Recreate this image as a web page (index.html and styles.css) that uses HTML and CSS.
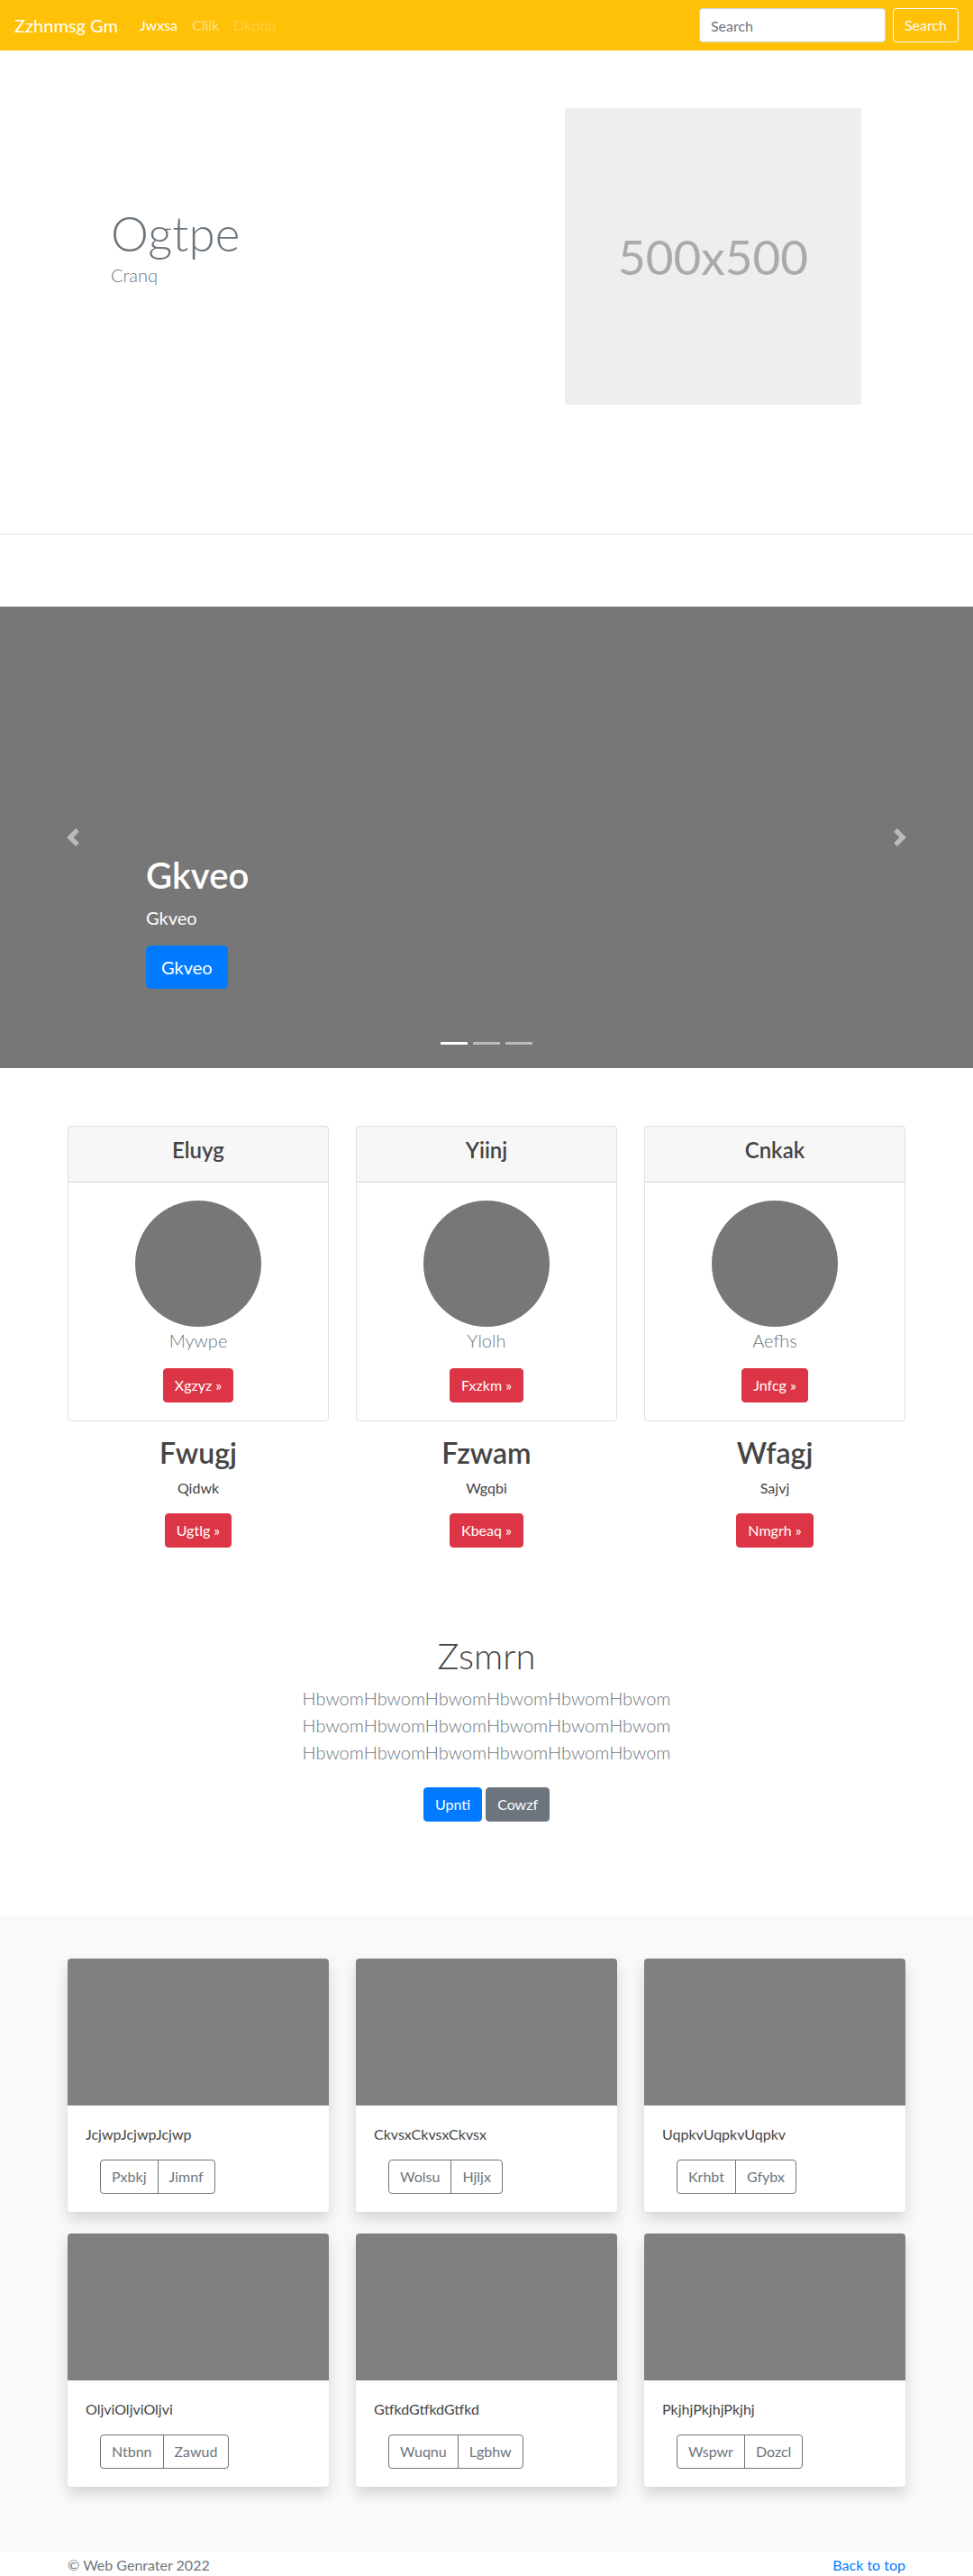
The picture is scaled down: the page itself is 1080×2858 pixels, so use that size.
FILE: index.html
```html
<!DOCTYPE html>
<html lang="en">
<head>
<meta charset="utf-8">
<title>Zzhnmsg Gm</title>
<link rel="stylesheet" href="styles.css">
</head>
<body>
<nav class="navbar">
  <a class="brand" href="#">Zzhnmsg Gm</a>
  <ul class="nav-links">
    <li><a class="nav-link active" href="#">Jwxsa</a></li>
    <li><a class="nav-link" href="#">Cliik</a></li>
    <li><a class="nav-link disabled" href="#">Dkpbp</a></li>
  </ul>
  <form class="search">
    <input class="search-input" type="text" placeholder="Search">
    <button class="btn btn-outline-light" type="button">Search</button>
  </form>
</nav>

<section class="hero">
  <div class="container hero-row">
    <div class="hero-text">
      <h1 class="display">Ogtpe</h1>
      <p class="hero-sub">Cranq</p>
    </div>
    <div class="hero-media">
      <div class="ph-500">500x500</div>
    </div>
  </div>
</section>

<div class="carousel">
  <div class="carousel-caption">
    <h1 class="caption-title">Gkveo</h1>
    <p class="caption-text">Gkveo</p>
    <div class="caption-cta"><a class="btn btn-lg btn-primary" href="#">Gkveo</a></div>
  </div>
  <div class="indicators">
    <span class="active"></span><span></span><span></span>
  </div>
  <a class="carousel-control prev" href="#">
    <svg viewBox="0 0 8 8" fill="#fff"><path d="M5.25 0l-4 4 4 4 1.5-1.5L4.25 4l2.5-2.5L5.25 0z"/></svg>
  </a>
  <a class="carousel-control next" href="#">
    <svg viewBox="0 0 8 8" fill="#fff"><path d="M2.75 0l-1.5 1.5L3.75 4l-2.5 2.5L2.75 8l4-4-4-4z"/></svg>
  </a>
</div>

<div class="container">
  <div class="features">
    <div class="fcard">
      <div class="fcard-header"><h4>Eluyg</h4></div>
      <div class="fcard-body">
        <div class="circle"></div>
        <p class="fcard-text">Mywpe</p>
        <a class="btn btn-danger" href="#">Xgzyz &raquo;</a>
      </div>
    </div>
    <div class="fcard">
      <div class="fcard-header"><h4>Yiinj</h4></div>
      <div class="fcard-body">
        <div class="circle"></div>
        <p class="fcard-text">Ylolh</p>
        <a class="btn btn-danger" href="#">Fxzkm &raquo;</a>
      </div>
    </div>
    <div class="fcard">
      <div class="fcard-header"><h4>Cnkak</h4></div>
      <div class="fcard-body">
        <div class="circle"></div>
        <p class="fcard-text">Aefhs</p>
        <a class="btn btn-danger" href="#">Jnfcg &raquo;</a>
      </div>
    </div>
  </div>

  <div class="marketing">
    <div class="mcol">
      <h2>Fwugj</h2>
      <p>Qidwk</p>
      <a class="btn btn-danger" href="#">Ugtlg &raquo;</a>
    </div>
    <div class="mcol">
      <h2>Fzwam</h2>
      <p>Wgqbi</p>
      <a class="btn btn-danger" href="#">Kbeaq &raquo;</a>
    </div>
    <div class="mcol">
      <h2>Wfagj</h2>
      <p>Sajvj</p>
      <a class="btn btn-danger" href="#">Nmgrh &raquo;</a>
    </div>
  </div>
</div>

<section class="jumbo">
  <div class="container jumbo-inner">
    <h1>Zsmrn</h1>
    <p class="lead">HbwomHbwomHbwomHbwomHbwomHbwom HbwomHbwomHbwomHbwomHbwomHbwom HbwomHbwomHbwomHbwomHbwomHbwom</p>
    <div class="actions">
      <a class="btn btn-primary" href="#">Upnti</a>
      <a class="btn btn-secondary" href="#">Cowzf</a>
    </div>
  </div>
</section>

<section class="album">
  <div class="container album-grid">
    <div class="acard">
      <div class="acard-img"></div>
      <div class="acard-body">
        <p class="acard-text">JcjwpJcjwpJcjwp</p>
        <div class="btn-group"><a class="btn btn-outline-secondary" href="#">Pxbkj</a><a class="btn btn-outline-secondary" href="#">Jimnf</a></div>
      </div>
    </div>
    <div class="acard">
      <div class="acard-img"></div>
      <div class="acard-body">
        <p class="acard-text">CkvsxCkvsxCkvsx</p>
        <div class="btn-group"><a class="btn btn-outline-secondary" href="#">Wolsu</a><a class="btn btn-outline-secondary" href="#">Hjljx</a></div>
      </div>
    </div>
    <div class="acard">
      <div class="acard-img"></div>
      <div class="acard-body">
        <p class="acard-text">UqpkvUqpkvUqpkv</p>
        <div class="btn-group"><a class="btn btn-outline-secondary" href="#">Krhbt</a><a class="btn btn-outline-secondary" href="#">Gfybx</a></div>
      </div>
    </div>
    <div class="acard">
      <div class="acard-img"></div>
      <div class="acard-body">
        <p class="acard-text">OljviOljviOljvi</p>
        <div class="btn-group"><a class="btn btn-outline-secondary" href="#">Ntbnn</a><a class="btn btn-outline-secondary" href="#">Zawud</a></div>
      </div>
    </div>
    <div class="acard">
      <div class="acard-img"></div>
      <div class="acard-body">
        <p class="acard-text">GtfkdGtfkdGtfkd</p>
        <div class="btn-group"><a class="btn btn-outline-secondary" href="#">Wuqnu</a><a class="btn btn-outline-secondary" href="#">Lgbhw</a></div>
      </div>
    </div>
    <div class="acard">
      <div class="acard-img"></div>
      <div class="acard-body">
        <p class="acard-text">PkjhjPkjhjPkjhj</p>
        <div class="btn-group"><a class="btn btn-outline-secondary" href="#">Wspwr</a><a class="btn btn-outline-secondary" href="#">Dozcl</a></div>
      </div>
    </div>
  </div>
</section>

<footer class="footer">
  <div class="container footer-row">
    <p>&copy; Web Genrater 2022</p>
    <p><a href="#">Back to top</a></p>
  </div>
</footer>
</body>
</html>
```

FILE: styles.css
```css
* { box-sizing: border-box; }
html, body { margin: 0; }
body {
  font-family: Lato, "Liberation Sans", sans-serif;
  font-size: 16px;
  line-height: 1.5;
  color: #212529;
  background: #fff;
}
h1, h2, h4, p { margin-top: 0; }
a { text-decoration: none; }

.container { max-width: 960px; margin: 0 auto; padding: 0 15px; }

/* Navbar */
.navbar {
  height: 56px;
  background: #ffc107;
  display: flex;
  align-items: center;
  padding: 8px 16px;
}
.brand { font-size: 20px; line-height: 30px; color: #fff; margin-right: 16px; }
.nav-links { display: flex; list-style: none; margin: 0; padding: 0; flex: 1; }
.nav-link { display: block; padding: 8px; line-height: 24px; color: rgba(255,255,255,.5); }
.nav-link.active { color: #fff; }
.nav-link.disabled { color: rgba(255,255,255,.25); }
.search { display: flex; align-items: center; margin: 0; }
.search-input {
  width: 207px; height: 38px;
  padding: 6px 12px;
  font-family: inherit; font-size: 16px;
  border: 1px solid #ced4da; border-radius: 4px;
  margin-right: 8px;
  color: #495057; background: #fff;
}
.search-input::placeholder { color: #6c757d; }

/* Buttons */
.btn {
  display: inline-block;
  font-family: inherit; font-size: 16px; font-weight: 400;
  line-height: 24px;
  padding: 6px 12px;
  border: 1px solid transparent;
  border-radius: 4px;
  text-align: center;
  vertical-align: middle;
  cursor: pointer;
}
.btn-outline-light { color: #f8f9fa; border-color: #f8f9fa; background: transparent; }
.btn-primary { color: #fff; background: #007bff; border-color: #007bff; }
.btn-secondary { color: #fff; background: #6c757d; border-color: #6c757d; }
.btn-danger { color: #fff; background: #dc3545; border-color: #dc3545; }
.btn-outline-secondary { color: #6c757d; border-color: #6c757d; background: transparent; }
.btn-lg { font-size: 20px; line-height: 30px; padding: 8px 16px; border-radius: 4.8px; }

/* Hero */
.hero { padding: 64px 0 143px; border-bottom: 1px solid rgba(0,0,0,.1); margin-bottom: 80px; }
.hero-row { display: flex; }
.hero-text { flex: 0 0 552px; padding: 108px 0 0 48px; }
.display { font-size: 53px; font-weight: 300; line-height: 62px; margin: 0; color: #6c757d; }
.hero-sub { font-size: 20px; font-weight: 300; line-height: 30px; margin: 0; color: #6c757d; }
.ph-500 {
  width: 329px; height: 329px;
  background: #eee; color: #aaa;
  display: flex; align-items: center; justify-content: center;
  font-size: 53px;
}

/* Carousel */
.carousel { position: relative; height: 512px; background: #777; margin-bottom: 64px; }
.carousel-caption { position: absolute; left: 15%; right: 15%; bottom: 48px; padding: 20px 0; color: #fff; z-index: 2; }
.caption-title { font-size: 40px; font-weight: 600; line-height: 1.2; margin: 0 0 8px; }
.caption-text { font-size: 20px; line-height: 30px; margin: 0 0 16px; }
.caption-cta { display: flex; margin-bottom: 20px; }
.indicators { position: absolute; left: 0; right: 0; bottom: 26px; display: flex; justify-content: center; gap: 6px; }
.indicators span { width: 30px; height: 3px; background: rgba(255,255,255,.5); }
.indicators .active { background: #fff; }
.carousel-control { position: absolute; top: 0; bottom: 0; width: 15%; display: flex; align-items: center; justify-content: center; opacity: .5; }
.carousel-control.prev { left: 0; }
.carousel-control.next { right: 0; }
.carousel-control svg { width: 20px; height: 20px; }

/* Feature cards */
.features { display: grid; grid-template-columns: repeat(3, 1fr); column-gap: 30px; }
.fcard { border: 1px solid rgba(0,0,0,.125); border-radius: 4px; text-align: center; margin-bottom: 16px; }
.fcard-header { background: rgba(0,0,0,.03); border-bottom: 1px solid rgba(0,0,0,.125); padding: 12px 20px; }
.fcard-header h4 { font-size: 24px; font-weight: 600; line-height: 1.2; margin: 0 0 8px; color: #444; }
.fcard-body { padding: 20px; }
.circle { display: block; width: 140px; height: 140px; border-radius: 50%; background: #777; margin: 0 auto; }
.fcard-text { font-size: 20px; font-weight: 300; line-height: 30px; color: #6c757d; margin: 0 0 16px; }

.marketing { display: grid; grid-template-columns: repeat(3, 1fr); column-gap: 30px; text-align: center; }
.marketing h2 { font-size: 32px; font-weight: 600; line-height: 1.2; margin: 0 0 8px; color: #444; }
.marketing p { margin: 0 0 16px; color: #444; }

/* Jumbotron */
.jumbo { padding: 96px 0; text-align: center; }
.jumbo-inner { max-width: 640px; }
.jumbo h1 { font-size: 40px; font-weight: 300; line-height: 1.2; margin: 0 0 8px; color: #444; }
.jumbo .lead { font-size: 20px; font-weight: 300; line-height: 30px; color: #6c757d; margin: 0 0 16px; }
.actions { display: flex; justify-content: center; gap: 4px; padding: 8px 0; }

/* Album */
.album { background: #f8f9fa; padding: 48px 0; }
.album-grid { display: grid; grid-template-columns: repeat(3, 1fr); column-gap: 30px; }
.acard { background: #fff; border-radius: 4px; box-shadow: 0 8px 16px rgba(0,0,0,.15); margin-bottom: 24px; overflow: hidden; }
.acard-img { height: 163px; background: #808080; }
.acard-body { padding: 20px; }
.acard-text { margin: 0 0 16px; color: #444; }
.btn-group { display: inline-flex; margin-left: 16px; }
.btn-group .btn:first-child { border-top-right-radius: 0; border-bottom-right-radius: 0; }
.btn-group .btn + .btn { margin-left: -1px; border-top-left-radius: 0; border-bottom-left-radius: 0; }

/* Footer */
.footer { padding: 3px 0 48px; color: #6c757d; }
.footer-row { display: flex; justify-content: space-between; }
.footer p { margin: 0; }
.footer a { color: #007bff; }
```
